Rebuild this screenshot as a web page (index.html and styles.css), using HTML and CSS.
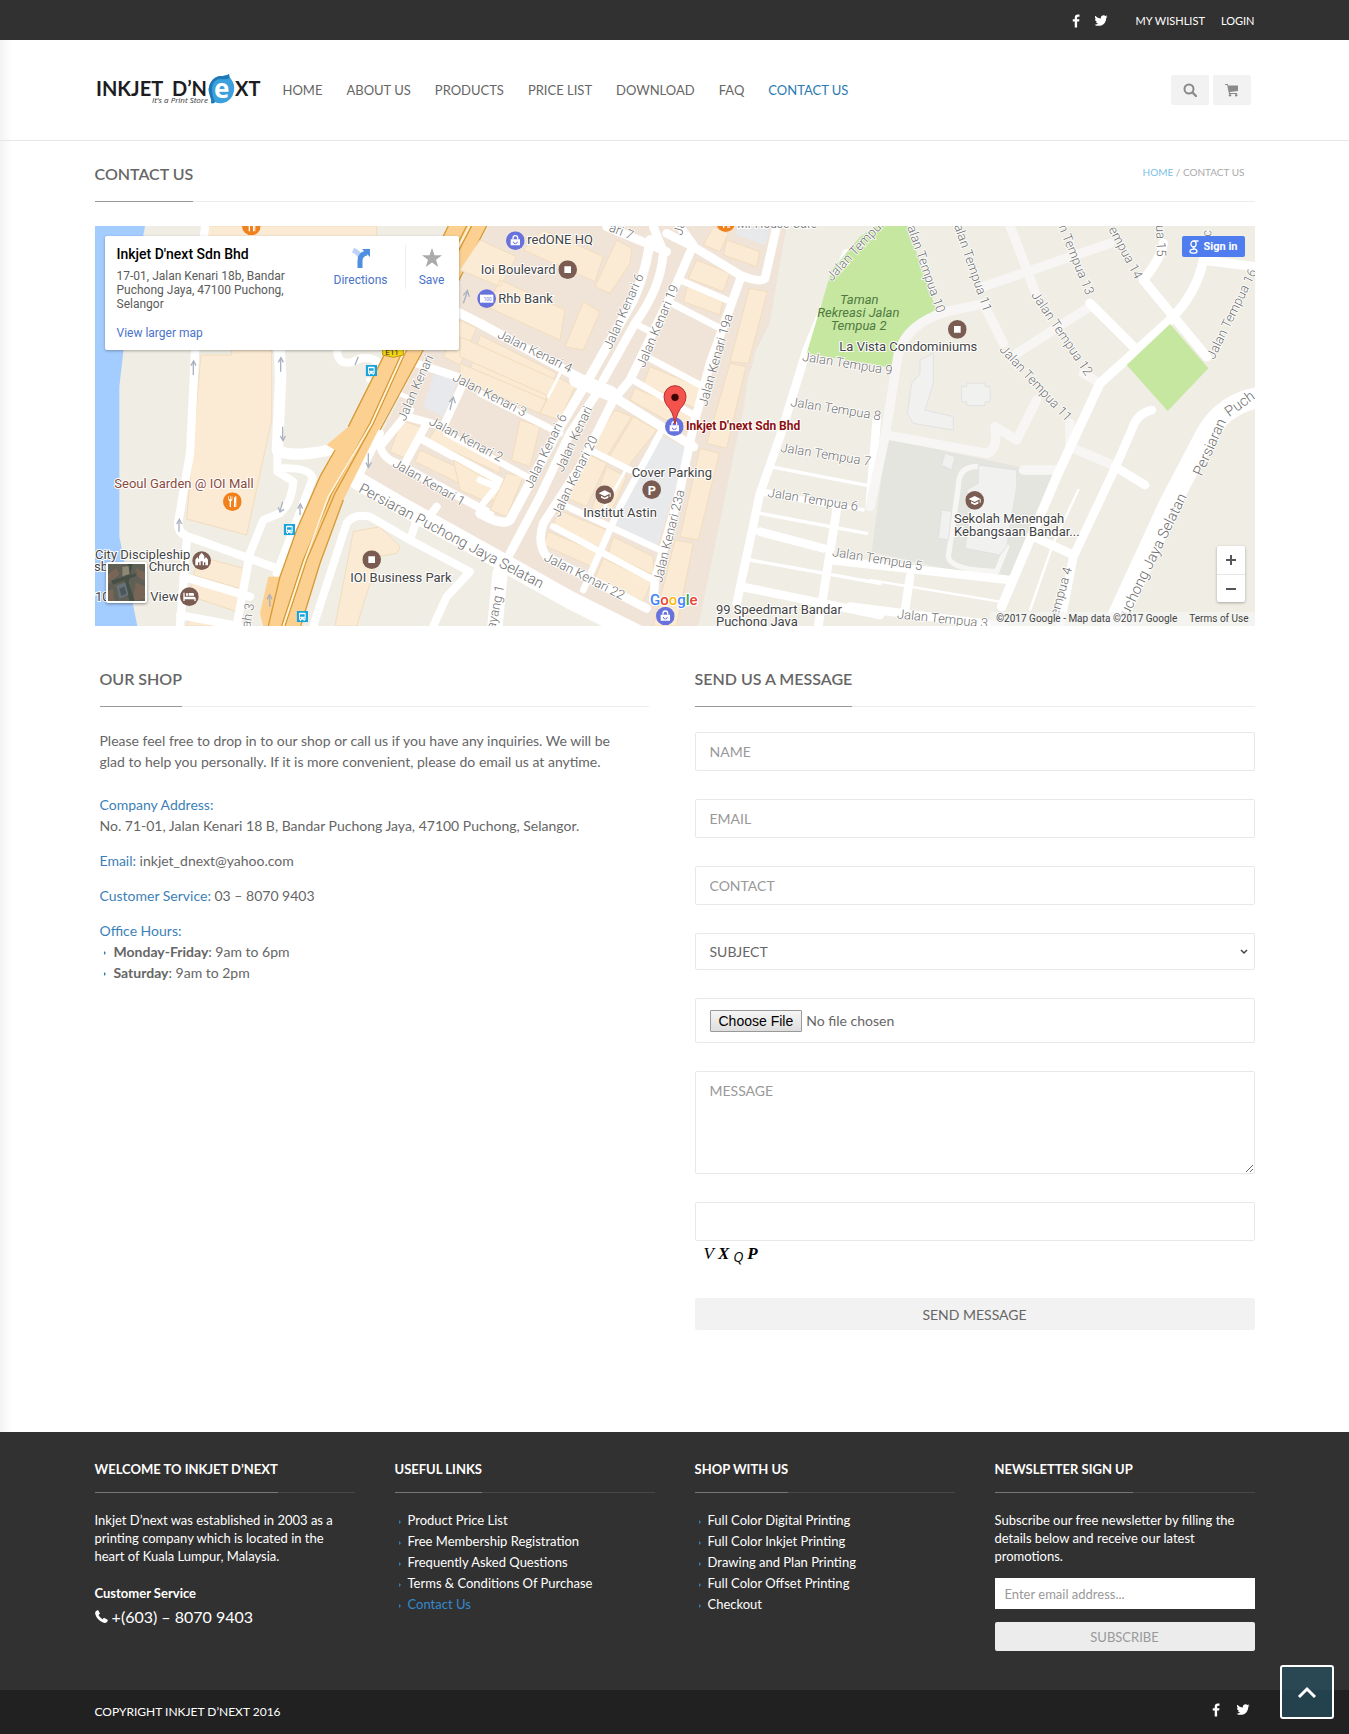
FILE: index.html
```html
<!DOCTYPE html>
<html lang="en">
<head>
<meta charset="utf-8">
<meta name="viewport" content="width=device-width, initial-scale=1">
<title>Contact Us - Inkjet D'next</title>
<link rel="stylesheet" href="styles.css">
</head>
<body>
<svg class="defs" aria-hidden="true">
  <symbol id="fb" viewBox="0 0 1024 1792"><path d="M959 140v264H802q-86 0-116 36t-30 108v189h293l-39 296H656v759H350v-759H95V737h255V519q0-186 104-288.500T731 128q147 0 228 12z"/></symbol>
  <symbol id="tw" viewBox="0 0 1664 1792"><path d="M1620 408q-67 98-162 167 1 14 1 42 0 130-38 259.500T1305.500 1125 1121 1335.500t-258 146-323 54.500q-271 0-496-145 35 4 78 4 225 0 401-138-105-2-188-64.500T221 1033q33 5 61 5 43 0 85-11-112-23-185.500-111.500T108 710v-4q68 38 146 41-66-44-105-115t-39-154q0-88 44-163 121 149 294.500 238.500T820 653q-8-38-8-74 0-134 94.500-228.500T1135 256q140 0 236 102 109-21 205-78-37 115-142 178 93-10 186-50z"/></symbol>
  <symbol id="shopping" viewBox="-28 -28 56 56"><circle r="28" fill="#6872dc"/><path d="M-14-4h28v18h-28z" fill="#fff"/><path d="M-7-4v-4a7 7 0 0 1 14 0v4" fill="none" stroke="#fff" stroke-width="4"/><path d="M-6 3a6 6 0 0 0 12 0" fill="none" stroke="#6872dc" stroke-width="3"/></symbol>
  <symbol id="place" viewBox="-28 -28 56 56"><circle r="28" fill="#7a5c52"/><path d="M-10-10h20v20h-20z" fill="#fff"/></symbol>
  <symbol id="school" viewBox="-28 -28 56 56"><circle r="28" fill="#7a5c52"/><path d="M0-13l18 9v11h-3V-3L0 5l-18-9zM-11 3L0 9l11-6v7L0 14l-11-5z" fill="#fff"/></symbol>
  <symbol id="food" viewBox="-28 -28 56 56"><circle r="28" fill="#f0811d"/><path d="M-12-16v9q0 5 4 6v17h4V-1q4-1 4-6v-9h-2v9h-3v-9h-2v9h-3v-9zM5 16V-10q1-6 7-6v32H9V4H8v12z" fill="#fff"/></symbol>
  <symbol id="bus" viewBox="-17 -17 34 34"><path d="M-17-17h34v34h-34z" fill="#18a4dc"/><path d="M-10-9q0-3 3-3H7q3 0 3 3V9H7v4H4V9h-8v4h-3V9h-3z" fill="#fff"/><path d="M-7-7H7v7H-7zM-7 3h3v3h-3zM4 3h3v3H4z" fill="#18a4dc"/></symbol>
</svg>

<div class="topbar">
  <div class="container topbar-row">
    <a class="social" href="#" aria-label="Facebook"><svg class="ico-fb"><use href="#fb"/></svg></a>
    <a class="social" href="#" aria-label="Twitter"><svg class="ico-tw"><use href="#tw"/></svg></a>
    <a class="top-link first" href="#">MY WISHLIST</a>
    <a class="top-link" href="#">LOGIN</a>
  </div>
</div>

<header class="header">
  <div class="container header-row">
    <a class="logo" href="#" aria-label="Inkjet D'next">
      <svg width="168" height="36" viewBox="0 0 168 36">
        <g class="logo-word"><text x="1" y="24">INKJET</text><text x="77" y="24">D’N</text><text x="140" y="24">XT</text></g>
        <path d="M134 2q0 3 2 5 4 5 3 12-2 10-11 12-5 1-8-1-1 2-4 1 1-3-1-7-3-8 1-14 3-5 9-6 6 0 9-2z" fill="#3ba0dc"/>
        <path d="M134 2q0 3 1 4-4 2-9 1-8 0-9 9 0 8 3 14-1 2-4 1 1-3-1-7-3-8 1-14 3-5 9-6 6 0 9-2z" fill="#1f78b8"/>
        <text class="logo-e" x="119" y="26">e</text>
        <text class="logo-tag" x="57" y="31">It's a Print Store</text>
      </svg>
    </a>
    <nav class="nav">
      <a href="#">HOME</a><a href="#">ABOUT US</a><a href="#">PRODUCTS</a><a href="#">PRICE LIST</a><a href="#">DOWNLOAD</a><a href="#">FAQ</a><a class="active" href="#">CONTACT US</a>
    </nav>
    <div class="tools">
      <button type="button" aria-label="Search"><svg width="14" height="14" viewBox="0 0 14 14"><circle cx="6" cy="6" r="4.500" fill="none" stroke="currentColor" stroke-width="2"/><path d="M9.500 9.500l3.500 3.500" stroke="currentColor" stroke-width="2.400" stroke-linecap="round"/></svg></button>
      <button type="button" aria-label="Cart"><svg width="14" height="14" viewBox="0 0 14 14" fill="currentColor"><path d="M0 1h2.800l.4 1.500H13V8L4.700 9l.2 1H12v1H4L2.200 2H0z"/><circle cx="5" cy="12.300" r="1.200"/><circle cx="11.200" cy="12.300" r="1.200"/></svg></button>
    </div>
  </div>
</header>

<main class="main">
  <div class="container">
    <div class="page-head rule">
      <h1 class="title"><span>CONTACT US</span></h1>
      <div class="crumbs"><a href="#">HOME</a> / CONTACT US</div>
    </div>

    <section class="map" aria-label="Map">
      <svg class="map-art" viewBox="0 0 3480 1200" preserveAspectRatio="xMidYMid slice">
        <rect width="3480" height="1200" fill="#efede4"/>
        <path fill="#f0e4d9" d="M1180 0H2075L2025 290 1980 380 1810 1200H1600L1190 1010 790 760 990 370z"/>
        <path fill="#f0ede5" d="M2075 0L2025 290 1960 450 1850 1200H1960L2200 130V0z"/>
        <g transform="translate(-15 -18)">
          <path fill="#a3ccff" d="M15 18H165L105 350 88 500V950L142 1218H15z"/>
          <g class="bld">
            <path d="M355 18H860V80H355zM333 405H425V390H545V600L470 945 290 897z"/>
            <path d="M790 935L870 920 930 980 920 1000 865 1010 800 1218H735zM330 1010L480 1050 465 1110 310 1065zM310 1085L465 1130 440 1175 290 1125zM300 1195L380 1218H290z"/>
            <path d="M935 600L1000 625 960 720 900 695zM1040 620L1230 715 1230 760 1015 660zM990 690L1240 805V855L975 725z"/>
            <path d="M1110 300L1160 325 1110 435 1060 410zM1170 345L1400 460 1380 500 1155 400zM1150 410L1375 520 1355 560 1140 460z"/>
          </g>
          <path fill="#e8e9ec" d="M1035 455L1105 480 1060 590 1000 560z"/>
          <g class="road">
            <path stroke-width="25" d="M345 18L315 400 300 700 265 905Q260 945 310 955L560 1045M290 965L270 1218M280 1070L480 1130M270 1185L480 1225M480 1000L440 1218"/>
            <path stroke-width="34" d="M568 390L572 470 562 690Q600 715 720 690"/>
            <path stroke-width="24" d="M562 690V745Q660 740 668 775L560 1060M562 755L610 785Q605 850 570 880L520 900 480 1000M740 380Q740 440 790 425 830 400 870 430"/>
            <path stroke-width="14" d="M835 480L960 535"/>
            <path stroke-width="24" d="M870 640L800 780M1100 470L980 430M1120 490L1060 620 950 590M1010 610L940 740M960 570L870 680Q880 715 920 730L1200 880M1000 660L1240 790M670 1218L770 910Q790 880 840 890L960 960 980 900M960 960L1140 1055 1070 1130 1030 1218M1040 860L1010 900"/>
            <path stroke-width="54" d="M800 780L920 850 1200 1005 1440 1140 1640 1240"/>
          </g>
          <path fill="#fcd091" d="M1075 18L870 430 775 620 710 675 735 690 690 770 620 930 570 1070H535L510 1180 520 1218H630L690 1030 760 840 860 640 1000 390 1190 18z"/>
          <g fill="none" stroke="#d79b38" stroke-width="4"><path d="M1075 18L870 430 775 620M735 690L690 770 620 930 570 1070 535 1218M632 1218L690 1030 760 840M870 630L1000 390 1190 18M1130 18L935 400 840 610 725 820 640 1020 575 1218M1145 18L945 400 850 610 735 820 650 1020 585 1218"/></g>
          <path fill="none" stroke="#fff5dd" stroke-width="5" d="M1138 18L940 400 845 610 715 830 645 1020 580 1218"/>
          <path fill="#f8d716" stroke="#b89a10" stroke-width="3" d="M878 380H940V405L910 412 878 405z"/>
          <text class="shield" x="886" y="404">E11</text>
          <g class="arrow"><path d="M310 465V425M572 455V415M578 620V660M267 935V900M835 700V740M630 885V855M578 845L570 875M540 1160L538 1125M1080 570L1088 535M1120 250L1132 215M805 410L795 435"/><path d="M303 437l8-14 7 14M565 427l8-14 7 14M571 648l8 14 7-14M260 912l8-14 7 14M828 728l7 14 9-14M623 866l8-14 7 14M565 862l5 14 12-8M531 1138l8-14 7 14M1078 546l12-14 6 18M1120 226l12-14 6 18"/></g>
        </g>
        <g transform="translate(1155 -18)">
          <g class="bld">
            <path d="M190 30L370 110 345 185 130 90zM410 60L455 85 450 130 390 220 345 200zM60 180L255 270 240 360 20 260zM310 245L360 275 310 390 255 380zM0 60L110 110 60 200-60 150z"/>
            <path d="M700 20L745 40 720 95 670 75zM740 60L840 95 830 140 730 105zM650 120L750 160 730 215 625 175zM625 190L730 235 720 285 610 245zM808 205L862 215 805 430 750 425zM750 430L798 440 740 685 680 670zM660 685L718 700 655 960 600 950zM585 960L640 970 590 1218H520z"/>
            <path d="M510 440L670 505 655 570 490 490zM465 505L650 580 630 640 450 540zM405 570L455 590 380 710 330 680zM460 590L530 630 440 745 385 715zM320 700L380 730 320 860 250 830zM380 740L440 770 390 885 335 865zM235 870L380 930 365 985 220 915zM205 935L350 995 335 1040 190 975zM400 950L520 1010V1065L385 1000zM370 1015L515 1085 490 1145 345 1075z"/>
            <path d="M230 470L285 500 240 600 180 580zM-60 350L230 480 210 530-60 410zM-60 430L200 540 180 580-60 480zM120 600L180 620 150 740 95 720zM80 760L130 770 80 890 30 870zM-80 720L45 790 30 850-60 810z"/>
          </g>
          <path fill="#e8e9eb" d="M530 640L625 690 530 980 400 910zM770 18L870 25 855 75 770 45z"/>
          <g class="road">
            <path stroke-width="28" d="M-100 260L0 310 300 475 400 530 640 680M510 60Q500 150 460 240L330 470 240 620 90 900Q70 920 0 880"/>
            <path stroke-width="26" d="M520 20L550 95Q545 200 465 310L370 480M350 520L270 640 180 830 90 1000M600 20L640 75 590 190 450 480 400 540 300 740 190 910Q170 970 200 1010L500 1165M890 20L855 175Q840 190 780 165L640 80 560 40M380 20L560 95M780 180L690 430 640 620 600 810 525 1080 520 1140"/>
            <path stroke-width="20" d="M600 180L740 240M575 250L720 325M465 310L520 340M500 410L660 495M450 475L650 590M330 690L450 750M230 845L540 990M220 920L520 1080M540 640L420 860 310 1110M0 520L240 640M-100 640L140 770M0 780L50 800 10 850"/>
            <path stroke-width="9" d="M240 460L205 530M440 745L375 860"/>
            <path stroke-width="46" d="M290 480L390 520"/>
            <path stroke-width="46" d="M60 1060L45 1218"/>
            <path stroke-width="26" d="M1100 100L980 390 900 650 840 820 770 1150M840 935L1030 985M785 1100L1200 1185M1190 600L1170 850M1070 870L1015 1218"/>
            <path stroke-width="10" d="M870 740L1180 800M840 820L1060 860M840 880L1160 940M810 1020L1200 1090M845 810L1150 870"/>
          </g>
        </g>
        <g transform="translate(2325 -18)">
          <path fill="#c6e79f" d="M20 18H112L198 268 115 325 72 445-190 400-115 150-30 50z"/>
          <path fill="#e4e5df" d="M50 655L560 765 420 1075 240 1050 5 995z"/>
          <g class="road soft" stroke-width="28">
            <path d="M345 250L230 275Q110 310 85 400L45 650 0 860M420 18L475 160 500 230M340 200L720 70M340 250L400 370M440 400L660 260M50 645L350 700Q385 690 375 620L440 660 500 540M460 750H560M600 610L600 680 740 740M690 490L640 460"/>
            <path stroke-width="16" d="M320 740Q265 740 265 800L235 1010Q240 1050 380 1055L410 980"/>
          </g>
          <g fill="#f1f1f0" stroke="#e1e2e2" stroke-width="3"><path d="M290 490H345V500H360V545H345V557H290V545H275V500H290zM150 460V420L190 400V490L165 570 250 590V630L130 610 112 580 125 490z"/><path d="M325 735L440 750V800L410 980 390 1005 285 985 300 880 290 810 325 790zM225 700L255 710 245 750 215 735zM215 870L245 875 235 960 205 955z"/></g>
          <g class="road">
            <path stroke-width="28" d="M1000 120Q980 220 900 300L690 490 620 640 560 770 395 1160M820 180L1010 410M820 180Q870 120 880 70M1000 120L1155 140M660 250L800 390"/>
            <path stroke-width="26" d="M845 570Q800 580 785 630L735 745 610 1010 570 1218M735 740L825 795M490 950L610 1005M-120 1020L420 1080M120 1070L105 1170M-60 1160L400 1218"/>
            <path stroke-width="7" d="M625 810L550 970 480 1170M0 1080L390 1145"/>
            <path stroke-width="64" d="M1190 530Q1070 540 1010 640L900 850 720 1240"/>
          </g>
          <path fill="#c6e79f" d="M900 312L1015 445 893 573 770 435z"/>
        </g>

        <g class="street">
          <g transform="translate(-15 -18)">
            <text transform="translate(945 605) rotate(-66)">Jalan Kenari</text>
            <text transform="translate(905 738) rotate(30)">Jalan Kenari 1</text>
            <text transform="translate(1085 480) rotate(27)">Jalan Kenari 3</text>
            <text transform="translate(1015 612) rotate(28)">Jalan Kenari 2</text>
            <text class="big" transform="translate(803 815) rotate(28)">Persiaran Puchong Jaya Selatan</text>
            <text transform="translate(480 1225) rotate(-80)">ah 3</text>
          </g>
          <g transform="translate(1155 -18)">
            <text transform="translate(50 352) rotate(26)">Jalan Kenari 4</text>
            <text transform="translate(190 1020) rotate(27)">Jalan Kenari 22</text>
            <text transform="translate(393 390) rotate(-66)">Jalan Kenari 6</text>
            <text transform="translate(155 808) rotate(-64)">Jalan Kenari 6</text>
            <text transform="translate(248 758) rotate(-65)">Jalan Kenari</text>
            <text transform="translate(238 893) rotate(-64)">Jalan Kenari 20</text>
            <text transform="translate(493 445) rotate(-67)">Jalan Kenari 19</text>
            <text transform="translate(680 560) rotate(-74)">Jalan Kenari 19a</text>
            <text transform="translate(545 1090) rotate(-76)">Jalan Kenari 23a</text>
            <text transform="translate(45 1230) rotate(-78)">ayang 1</text>
            <text transform="translate(385 32) rotate(22)">ari 7</text>
            <text transform="translate(605 48) rotate(-75)">Ja</text>
            <text transform="translate(1055 185) rotate(-47)">Jalan Tempua</text>
            <text transform="translate(965 422) rotate(9)">Jalan Tempua 9</text>
            <text transform="translate(930 558) rotate(9)">Jalan Tempua 8</text>
            <text transform="translate(900 695) rotate(9)">Jalan Tempua 7</text>
            <text transform="translate(862 830) rotate(9)">Jalan Tempua 6</text>
            <text transform="translate(1055 1008) rotate(9)">Jalan Tempua 5</text>
            <text transform="translate(1250 1195) rotate(6)">Jalan Tempua 3</text>
          </g>
          <g transform="translate(2325 -18)">
            <text transform="translate(112 22) rotate(71)">alan Tempua 10</text>
            <text transform="translate(252 18) rotate(71)">alan Tempua 11</text>
            <text transform="translate(483 225) rotate(56)">Jalan Tempua 12</text>
            <text transform="translate(565 20) rotate(68)">n Tempua 13</text>
            <text transform="translate(715 28) rotate(62)">empua 14</text>
            <text transform="translate(858 15) rotate(88)">ua 15</text>
            <text transform="translate(1032 420) rotate(-64)">Jalan Tempua 16</text>
            <text transform="translate(387 390) rotate(47)">Jalan Tempua 11</text>
            <text transform="translate(565 1190) rotate(-74)">empua 4</text>
            <text class="big" transform="translate(995 770) rotate(-66)">Persiaran</text>
            <text class="big" transform="translate(1078 592) rotate(-36)">Puch</text>
            <text class="big" transform="translate(775 1190) rotate(-64)">uchong Jaya Selatan</text>
            <text transform="translate(1022 72) rotate(-88)">nc</text>
          </g>
        </g>
        <g class="poi">
          <g transform="translate(-15 -18)">
            <text class="food" x="73" y="803">Seoul Garden @ IOI Mall</text>
            <text x="15" y="1016">City Discipleship</text><text x="12" y="1054">sb</text><text x="176" y="1054">Church</text>
            <text x="15" y="1142">10</text><text x="181" y="1142">View</text>
            <text x="781" y="1085">IOI Business Park</text>
          </g>
          <g transform="translate(1155 -18)">
            <text x="142" y="73">redONE HQ</text><text x="2" y="161">Ioi Boulevard</text><text x="55" y="248">Rhb Bank</text>
            <text x="455" y="770">Cover Parking</text><text x="310" y="890">Institut Astin</text>
            <text x="708" y="1181">99 Speedmart Bandar</text><text x="708" y="1219">Puchong Jaya</text>
            <text class="park" x="1080" y="253">Taman</text><text class="park" x="1012" y="292">Rekreasi Jalan</text><text class="park" x="1052" y="331">Tempua 2</text>
            <text x="1078" y="394">La Vista Condominiums</text>
            <text class="faint" x="772" y="24">Mr House Cafe</text>
            <text class="mine" x="618" y="631">Inkjet D'next Sdn Bhd</text>
          </g>
          <g transform="translate(2325 -18)"><text x="252" y="908">Sekolah Menengah</text><text x="252" y="947">Kebangsaan Bandar...</text></g>
        </g>
        <g transform="translate(-43 -46)">
          <use href="#food" x="484" y="18" width="56" height="56"/><use href="#food" x="427" y="845" width="56" height="56"/>
          <use href="#place" x="845" y="1019" width="56" height="56"/>
        </g>
        <g transform="translate(-15 -18)">
          <circle cx="335" cy="1022" r="28" fill="#7a5c52"/><path fill="#fff" d="M316 1036V1019l6-8 5 7v-10l8-10 8 10v10l5-7 6 8v17h-8v-9h-4v9h-4v-12h-6v12h-4v-9h-4v9z"/>
          <circle cx="298" cy="1130" r="28" fill="#7a5c52"/><path fill="#fff" d="M280 1118h4v12h28q5 0 5 5v8h-4v-5h-29v5h-4zM288 1120h7v7h-7zM297 1119h11q4 0 4 4v4h-15z"/>
          <use href="#bus" x="827" y="435" width="34" height="34"/><use href="#bus" x="581" y="912" width="34" height="34"/><use href="#bus" x="620" y="1173" width="34" height="34"/>
        </g>
        <g transform="translate(1127 -46)">
          <use href="#shopping" x="106" y="62" width="56" height="56"/><use href="#place" x="263" y="149" width="56" height="56"/>
          <use href="#food" x="737" y="8" width="56" height="56"/><use href="#school" x="374" y="824" width="56" height="56"/>
          <use href="#shopping" x="583" y="620" width="56" height="56"/><use href="#shopping" x="556" y="1188" width="56" height="56"/>
          <use href="#place" x="1432" y="328" width="56" height="56"/><use href="#school" x="1484" y="841" width="56" height="56"/>
        </g>
        <g transform="translate(1155 -18)">
          <circle cx="20" cy="236" r="28" fill="#6872dc"/><path fill="#fff" d="M0 224h40v24H0z"/><text class="note" x="11" y="244">100</text>
          <circle cx="515" cy="809" r="28" fill="#7a5c52"/><text class="parking" x="503" y="824">P</text>
          <path d="M585 612Q580 575 560 555 552 543 552 530a33 33 0 0 1 66 0q0 13-8 25-20 20-25 57z" fill="#f4524d" stroke="#b5322e" stroke-width="3"/><circle cx="585" cy="532" r="11" fill="#3b0505"/>
          <text class="google" x="510" y="1156"><tspan fill="#4285f4">G</tspan><tspan fill="#ea4335">o</tspan><tspan fill="#fbbc05">o</tspan><tspan fill="#4285f4">g</tspan><tspan fill="#34a853">l</tspan><tspan fill="#ea4335">e</tspan></text>
        </g>
      </svg>

      <div class="map-card">
        <div class="map-place">
          <strong>Inkjet D'next Sdn Bhd</strong>
          <p>17-01, Jalan Kenari 18b, Bandar Puchong Jaya, 47100 Puchong, Selangor</p>
          <a href="#">View larger map</a>
        </div>
        <a class="map-act directions" href="#"><svg width="22" height="22" viewBox="0 0 22 22"><path d="M3 3q7 3 8 9" fill="none" stroke="#bcd3f7" stroke-width="5"/><path d="M10 21v-7q0-7 7-8" fill="none" stroke="#4f8fe0" stroke-width="5"/><path d="M12 2h8v8z" fill="#4f8fe0"/></svg>Directions</a>
        <a class="map-act save" href="#"><svg width="22" height="22" viewBox="0 0 22 22"><path d="M11 1l2.500 7.200h7.500l-6 4.600 2.200 7.200-6.200-4.400L4.800 20 7 12.800 1 8.200h7.500z" fill="#aaa"/></svg>Save</a>
      </div>
      <a class="sign-in" href="#"><svg width="10" height="14" viewBox="0 0 10 14" fill="none" stroke="#fff" stroke-width="1.300"><ellipse cx="4.500" cy="4" rx="2.600" ry="3"/><path d="M9.500 1H5M6 6.500q-3 1-1 2.200 3 1 3 2.500 0 2-3.500 2T1 11.400q0-2 4-2.200"/></svg>Sign in</a>
      <button class="satellite" type="button" aria-label="Satellite view"><svg viewBox="0 0 36 36"><path fill="#5f5f56" d="M0 0h36v36H0z"/><path fill="#796556" d="M0 10l8-6 3 6-11 10zM27 4l9 4v8l-7-3zM27 18l9 4v12l-12 2zM0 26l5-2 1 12H0z"/><path fill="#454f46" d="M19 0h5l-4 18 6 18h-5l-5-18zM3 16l24-7v3L5 20z"/><path fill="#8d8873" d="M14 3l6-1 1 8-7 2z"/><path fill="#66717a" d="M8 21l9-3 3 12-9 4z"/><path fill="#4d5658" d="M11 24l5-2 2 7-5 2z"/></svg></button>
      <div class="zoom"><button type="button" aria-label="Zoom in"><svg width="12" height="12"><path d="M1 6h10M6 1v10" stroke="#555" stroke-width="2"/></svg></button><button type="button" aria-label="Zoom out"><svg width="12" height="12"><path d="M1 6h10" stroke="#555" stroke-width="2"/></svg></button></div>
      <div class="credits"><span>©2017 Google - Map data ©2017 Google</span><a href="#">Terms of Use</a></div>
    </section>

    <div class="columns">
      <section class="shop">
        <div class="rule"><h2 class="title"><span>OUR SHOP</span></h2></div>
        <p class="intro">Please feel free to drop in to our shop or call us if you have any inquiries. We will be glad to help you personally. If it is more convenient, please do email us at anytime.</p>
        <p><b class="blue">Company Address:</b><br>No. 71-01, Jalan Kenari 18 B, Bandar Puchong Jaya, 47100 Puchong, Selangor.</p>
        <p><b class="blue">Email:</b> inkjet_dnext@yahoo.com</p>
        <p><b class="blue">Customer Service:</b> 03 – 8070 9403</p>
        <p class="hours-head"><b class="blue">Office Hours:</b></p>
        <ul class="hours">
          <li><strong>Monday-Friday</strong>: 9am to 6pm</li>
          <li><strong>Saturday</strong>: 9am to 2pm</li>
        </ul>
      </section>

      <section class="message">
        <div class="rule"><h2 class="title"><span>SEND US A MESSAGE</span></h2></div>
        <form class="form">
          <input class="field" type="text" placeholder="NAME" aria-label="Name">
          <input class="field" type="email" placeholder="EMAIL" aria-label="Email">
          <input class="field" type="text" placeholder="CONTACT" aria-label="Contact">
          <div class="select-wrap">
            <select class="field" aria-label="Subject"><option>SUBJECT</option></select>
            <svg class="caret" width="8" height="6"><path d="M1 1l3 3 3-3" fill="none" stroke="#444" stroke-width="1.500"/></svg>
          </div>
          <input class="field file" type="file" aria-label="Attachment">
          <textarea class="field area" placeholder="MESSAGE" aria-label="Message"></textarea>
          <div class="captcha">
            <input class="field" type="text" aria-label="Verification code">
            <div class="code"><i>V</i><i class="x">X</i><i class="q">Q</i><i class="p">P</i></div>
          </div>
          <button class="send" type="submit">SEND MESSAGE</button>
        </form>
      </section>
    </div>
  </div>
</main>

<footer class="footer">
  <div class="container footer-grid">
    <section>
      <div class="rule"><h3 class="title"><span>WELCOME TO INKJET D’NEXT</span></h3></div>
      <p>Inkjet D’next was established in 2003 as a printing company which is located in the heart of Kuala Lumpur, Malaysia.</p>
      <p class="service"><strong>Customer Service</strong></p>
      <p class="phone"><svg width="13" height="13" viewBox="0 0 13 13"><path fill="#fff" d="M1 1l2-1 2 3.500L3.500 5q1 2.500 4 4.300L9 7.800 13 10l-1 2q-1.500 1.500-4 .5Q2 10 .2 4 0 2 1 1z"/></svg> +(603) – 8070 9403</p>
    </section>
    <section>
      <div class="rule"><h3 class="title"><span>USEFUL LINKS</span></h3></div>
      <ul class="links">
        <li><a href="#">Product Price List</a></li><li><a href="#">Free Membership Registration</a></li><li><a href="#">Frequently Asked Questions</a></li><li><a href="#">Terms &amp; Conditions Of Purchase</a></li><li><a class="active" href="#">Contact Us</a></li>
      </ul>
    </section>
    <section>
      <div class="rule"><h3 class="title"><span>SHOP WITH US</span></h3></div>
      <ul class="links">
        <li><a href="#">Full Color Digital Printing</a></li><li><a href="#">Full Color Inkjet Printing</a></li><li><a href="#">Drawing and Plan Printing</a></li><li><a href="#">Full Color Offset Printing</a></li><li><a href="#">Checkout</a></li>
      </ul>
    </section>
    <section>
      <div class="rule"><h3 class="title"><span>NEWSLETTER SIGN UP</span></h3></div>
      <p>Subscribe our free newsletter by filling the details below and receive our latest promotions.</p>
      <form class="newsletter">
        <input type="email" placeholder="Enter email address..." aria-label="Email address">
        <button type="submit">SUBSCRIBE</button>
      </form>
    </section>
  </div>
  <div class="bottom">
    <div class="container bottom-row">
      <span>COPYRIGHT INKJET D’NEXT 2016</span>
      <div class="bottom-social">
        <a href="#" aria-label="Facebook"><svg class="ico-fb"><use href="#fb"/></svg></a>
        <a href="#" aria-label="Twitter"><svg class="ico-tw"><use href="#tw"/></svg></a>
      </div>
    </div>
  </div>
</footer>
<a class="to-top" href="#" aria-label="Back to top"><svg width="20" height="14" viewBox="0 0 20 14"><path d="M2 12l8-8 8 8" fill="none" stroke="#fff" stroke-width="3"/></svg></a>
</body>
</html>
```
FILE: styles.css
```css
* { box-sizing: border-box; }
body { margin: 0; font: 14px/21px Lato, "Open Sans", sans-serif; color: #666; background: #fff; }
a { color: inherit; text-decoration: none; }
h1, h2, h3, p, ul { margin: 0; padding: 0; font-weight: inherit; }
ul { list-style: none; }
button, input, select, textarea { font: inherit; margin: 0; }
.defs { position: absolute; width: 0; height: 0; }
.container { width: 100%; max-width: 1190px; margin: 0 auto; padding: 0 15px; }

/* Top bar */
.topbar { background: #313131; color: #fff; }
.topbar-row { display: flex; justify-content: flex-end; align-items: center; height: 40px; font-size: 11px; }
.social { display: flex; margin-right: 14px; }
.ico-fb { width: 8px; height: 15px; fill: #fff; }
.ico-tw { width: 14px; height: 15px; fill: #fff; }
.top-link { margin-left: 16px; }
.top-link.first { margin-left: 14px; }

/* Header */
.header, .main { background: linear-gradient(to right, #f3f3f3, #fff 12px); }
.header { border-bottom: 1px solid #e6e6e6; }
.header-row { display: flex; align-items: center; min-height: 100px; }
.logo { display: flex; margin-right: 20px; }
.logo-word { font: 700 20px Lato, sans-serif; fill: #1d1d1f; }
.logo-e { font: 700 26px "Open Sans", sans-serif; fill: #fff; }
.logo-tag { font: italic 8px "Open Sans", sans-serif; fill: #333; }
.nav { display: flex; flex-wrap: wrap; gap: 24px; font-size: 13px; }
.nav .active { color: #2a7ab0; }
.tools { display: flex; gap: 4px; margin: 0 4px 0 auto; }
.tools button { display: flex; align-items: center; justify-content: center; width: 38px; height: 30px; padding: 0; border: 0; border-radius: 2px; background: #f2f2f2; color: #8a8a8a; }

/* Section headings */
.rule { border-bottom: 1px solid #ececec; }
.title { display: flex; font-size: 16px; line-height: 24px; font-weight: 600; }
.title span { margin-bottom: -1px; padding-bottom: 15px; border-bottom: 1px solid #999; }
.page-head { display: flex; justify-content: space-between; padding-top: 21px; margin-bottom: 24px; }
.crumbs { padding: 0 10px; font-size: 10px; color: #aaa; }
.crumbs a { color: #7cc0e4; }

/* Map */
.map { position: relative; height: 400px; overflow: hidden; font-family: Roboto, sans-serif; }
.map-art { display: block; width: 100%; height: 100%; font-family: Roboto, sans-serif; }
.bld path { fill: #fbebd4; stroke: #f2ddbd; stroke-width: 3; }
.road path { fill: none; stroke: #fff; stroke-linecap: round; stroke-linejoin: round; }
.road.soft path { stroke: #f7f6f4; }
.arrow path { fill: none; stroke: #a9b0bf; stroke-width: 4; }
.street text { font-size: 39px; font-weight: 300; fill: #6e6e6e; stroke: #fff; stroke-width: 5px; paint-order: stroke; }
.street .big { font-size: 44px; }
.poi text { font-size: 39px; fill: #444; stroke: #fff; stroke-width: 6px; paint-order: stroke; }
.poi .food { fill: #8a4b3c; }
.poi .park { fill: #4e7a42; font-style: italic; stroke: none; }
.poi .faint { fill: #888; font-size: 36px; }
.poi .mine { fill: #8c1010; font-weight: 700; font-size: 36px; }
.shield { font-size: 24px; fill: #333; }
.note { font-size: 14px; fill: #6872dc; }
.parking { font-size: 38px; font-weight: 700; fill: #fff; }
.google { font-size: 45px; font-weight: 500; stroke: #fff; stroke-width: 6px; paint-order: stroke; }
.map-card { position: absolute; left: 10px; top: 10px; display: flex; width: 354px; min-height: 114px; padding: 9px 0 8px 12px; border-radius: 2px; background: #fff; box-shadow: 0 1px 3px rgba(0, 0, 0, .3); font-size: 12px; line-height: 14px; }
.map-place { width: 200px; }
.map-place strong { display: block; color: #000; font-size: 14px; line-height: 18px; font-weight: 500; }
.map-place p { margin: 6px 0 15px; padding-right: 20px; color: #5b5b5b; }
.map-card a { color: #4a73c9; }
.map-act { display: flex; flex-direction: column; align-items: center; gap: 4px; padding-top: 2px; height: 44px; }
.directions { width: 88px; }
.save { width: 53px; border-left: 1px solid #eee; }
.sign-in { position: absolute; right: 10px; top: 10px; display: flex; align-items: center; gap: 5px; height: 21px; padding: 0 7px; border-radius: 2px; background: #4f7df0; color: #fff; font-size: 11px; font-weight: 700; }
.satellite { position: absolute; left: 11px; bottom: 23px; width: 41px; height: 41px; padding: 0; border: 2px solid #fff; border-radius: 2px; box-shadow: 0 1px 3px rgba(0, 0, 0, .4); }
.satellite svg { display: block; width: 100%; height: 100%; }
.zoom { position: absolute; right: 10px; bottom: 24px; width: 28px; border-radius: 2px; background: #fff; box-shadow: 0 1px 3px rgba(0, 0, 0, .3); }
.zoom button { display: flex; align-items: center; justify-content: center; width: 28px; height: 28px; padding: 0; border: 0; background: none; }
.zoom button + button { border-top: 1px solid #e6e6e6; }
.credits { position: absolute; right: 0; bottom: 0; display: flex; gap: 12px; padding: 0 6px; background: rgba(245, 245, 245, .7); color: #444; font-size: 10px; line-height: 14px; }

/* Shop details and form */
.columns { display: grid; grid-template-columns: 549px 1fr; gap: 46px; padding: 41px 0 102px 5px; }
.shop .rule { margin-bottom: 23px; }
.message .rule { margin-bottom: 25px; }
.shop p { margin-bottom: 14px; }
.shop .intro { margin-bottom: 22px; padding-right: 16px; }
.shop .hours-head { margin-bottom: 0; }
.blue { color: #3c7fb8; font-weight: 400; }
.hours li, .links li { position: relative; padding-left: 14px; }
.hours li::before, .links li::before { content: ""; position: absolute; left: 4px; top: 10px; border: 2px solid transparent; border-left-color: #3181bf; }
.form { display: flex; flex-direction: column; gap: 28px; }
.field { display: block; width: 100%; height: 39px; padding: 0 14px; border: 1px solid #e8e8e8; border-radius: 2px; outline: 0; background: #fff; color: #666; }
.field::placeholder { color: #999; }
.select-wrap { position: relative; }
.select-wrap .field { height: 37px; appearance: none; }
.caret { position: absolute; right: 7px; top: 16px; }
.file { height: 45px; padding: 11px 14px; }
.file::file-selector-button { height: 22px; margin: 0 4px 0 0; padding: 0 8px; border: 1px solid #999; border-radius: 1px; background: linear-gradient(#f6f6f6, #dedede); color: #000; font: 14px/18px "Liberation Sans", sans-serif; }
.area { height: 103px; padding: 8px 14px; resize: vertical; }
.code { display: flex; gap: 4px; height: 29px; padding: 2px 9px; color: #000; font: 17px/21px "Liberation Serif", serif; }
.code .x, .code .p { font-weight: 700; }
.code .q { padding-top: 3px; font-family: "Open Sans", sans-serif; font-size: 14px; }
.send { height: 32px; padding: 0; border: 0; border-radius: 2px; background: #f2f2f2; color: #666; }

/* Footer */
.footer { background: #313131; color: #fff; font-size: 13px; line-height: 18px; }
.footer-grid { display: grid; grid-template-columns: repeat(4, 1fr); gap: 40px; min-height: 258px; padding-top: 25px; }
.footer .rule { margin-bottom: 18px; border-color: #484848; }
.footer .title { font-size: 13px; font-weight: 700; }
.footer .title span { padding-bottom: 11px; border-color: #777; }
.footer .service { margin: 19px 0 4px; }
.footer .phone { font-size: 16px; line-height: 22px; }
.links li { padding-left: 13px; line-height: 21px; }
.links { margin-top: -1px; }
.links .active { color: #3489cf; }
.newsletter { display: flex; flex-direction: column; gap: 13px; margin-top: 13px; }
.newsletter input { width: 100%; height: 31px; padding: 0 10px; border: 0; background: #fff; }
.newsletter input::placeholder { color: #999; }
.newsletter button { height: 29px; padding: 0; border: 0; border-radius: 2px; background: #ececec; color: #999; }
.bottom { background: #212121; }
.bottom-row { display: flex; align-items: center; justify-content: space-between; height: 44px; font-size: 12px; }
.bottom-social { display: flex; gap: 16px; padding-right: 5px; }
.to-top { position: fixed; right: 15px; bottom: 15px; display: flex; align-items: center; justify-content: center; width: 54px; height: 54px; border: 2px solid #fff; border-radius: 3px; background: rgba(38, 86, 108, .6); }
```
